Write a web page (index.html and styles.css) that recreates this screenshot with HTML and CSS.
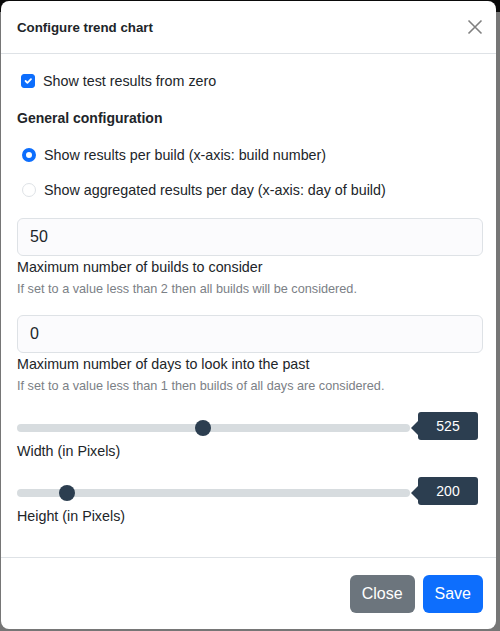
FILE: index.html
```html
<!DOCTYPE html>
<html lang="en">
<head>
    <meta charset="UTF-8">
    <title>Configure trend chart</title>
    <link rel="stylesheet" href="styles.css">
</head>
<body>
    <div class="modal">
        <div class="modal-header">
            <h5 class="modal-title">Configure trend chart</h5>
            <button class="btn-close" type="button" aria-label="Close">
                <svg width="16" height="16" viewBox="0 0 16 16"><path d="M1.5 1.5 L14.5 14.5 M14.5 1.5 L1.5 14.5" stroke="#808080" stroke-width="1.6" fill="none"/></svg>
            </button>
        </div>

        <div class="modal-body">
            <label class="check-row">
                <input type="checkbox" class="check-input" checked>
                Show test results from zero
            </label>

            <h6 class="section-title">General configuration</h6>

            <label class="check-row radio-row">
                <input type="radio" class="radio-input" name="mode" checked>
                Show results per build (x-axis: build number)
            </label>
            <label class="check-row radio-row second">
                <input type="radio" class="radio-input" name="mode">
                Show aggregated results per day (x-axis: day of build)
            </label>

            <input type="number" class="form-control first" value="50">
            <label class="form-label">Maximum number of builds to consider</label>
            <div class="form-text">If set to a value less than 2 then all builds will be considered.</div>

            <input type="number" class="form-control" value="0">
            <label class="form-label">Maximum number of days to look into the past</label>
            <div class="form-text">If set to a value less than 1 then builds of all days are considered.</div>

            <div class="range-row">
                <input type="range" class="range" min="100" max="1000" value="525">
                <output class="bubble">525</output>
            </div>
            <label class="form-label">Width (in Pixels)</label>

            <div class="range-row second">
                <input type="range" class="range" min="100" max="1000" value="200">
                <output class="bubble">200</output>
            </div>
            <label class="form-label">Height (in Pixels)</label>
        </div>

        <div class="modal-footer">
            <button class="btn btn-secondary" type="button">Close</button>
            <button class="btn btn-primary" type="button">Save</button>
        </div>
    </div>
</body>
</html>
```

FILE: styles.css
```css
html {
    background: linear-gradient(#0a0a0a 0, #0a0a0a 12px, #767676 12px);
    height: 100%;
}

body {
    margin: 0;
    font-family: "Liberation Sans", Arial, sans-serif;
    font-size: 14.3px;
    color: #212529;
}

.modal {
    margin: 1px 4px 0 1px;
    height: 628px;
    background: #fff;
    border-radius: 8px;
    display: flex;
    flex-direction: column;
}

.modal-header {
    height: 52px;
    border-bottom: 1px solid #dee2e6;
    display: flex;
    align-items: center;
    justify-content: space-between;
    padding: 0 13px 0 16px;
}

.modal-title {
    margin: 0;
    font-size: 13.3px;
    font-weight: bold;
}

.btn-close {
    background: none;
    border: none;
    padding: 0;
    width: 16px;
    height: 16px;
    cursor: pointer;
}

.modal-body {
    flex: 1;
    padding: 16px 13px 0 16px;
    display: flex;
    flex-direction: column;
}

.check-row {
    display: flex;
    align-items: center;
    height: 22px;
    padding-left: 4px;
}

.check-input,
.radio-input {
    appearance: none;
    -webkit-appearance: none;
    width: 14px;
    height: 14px;
    margin: 0 8px 0 0;
    border: 1px solid #dee2e6;
    background: #fff;
}

.check-input {
    border-radius: 3px;
}

.check-input:checked {
    background-color: #0d6efd;
    border-color: #0d6efd;
    background-image: url("data:image/svg+xml,%3csvg xmlns='http://www.w3.org/2000/svg' viewBox='0 0 20 20'%3e%3cpath fill='none' stroke='%23fff' stroke-linecap='round' stroke-linejoin='round' stroke-width='3' d='m6 10 3 3 6-6'/%3e%3c/svg%3e");
    background-size: 100% 100%;
}

.radio-input {
    border-radius: 50%;
}

.radio-input:checked {
    border: 4px solid #0d6efd;
}

.radio-row {
    margin-top: 15px;
}

.radio-row.second {
    margin-top: 13px;
}

.radio-row .radio-input {
    margin-left: 1px;
}

.section-title {
    margin: 15px 0 0;
    font-size: 14px;
    font-weight: bold;
    line-height: 22px;
}

.form-control {
    box-sizing: border-box;
    height: 38px;
    margin-top: 17px;
    padding: 0 12px;
    border: 1px solid #dee2e6;
    border-radius: 6px;
    background: #fbfbfd;
    font-family: inherit;
    font-size: 16px;
    color: #212529;
}

.form-label {
    line-height: 22px;
}

.form-text {
    margin-top: 2px;
    line-height: 18px;
    font-size: 12.7px;
    color: #7b8086;
}

.range-row {
    margin-top: 17px;
    height: 28px;
    display: flex;
    align-items: center;
    padding-right: 5px;
}

.range-row.second {
    margin-top: 15px;
}

.range {
    -webkit-appearance: none;
    appearance: none;
    flex: 1;
    margin: 4px 0 0;
    height: 16px;
    background: transparent;
}

.range::-webkit-slider-runnable-track {
    height: 8px;
    background: #d7dcdf;
    border-radius: 4px;
}

.range::-webkit-slider-thumb {
    -webkit-appearance: none;
    width: 16px;
    height: 16px;
    margin-top: -4px;
    border: none;
    border-radius: 50%;
    background: #2c3e50;
}

.bubble {
    position: relative;
    width: 60px;
    height: 28px;
    margin-left: 8px;
    line-height: 28px;
    text-align: center;
    background: #2c3e50;
    color: #fff;
    border-radius: 3px;
    font-size: 14px;
}

.bubble::after {
    content: "";
    position: absolute;
    left: -7px;
    top: 9px;
    border-top: 7px solid transparent;
    border-bottom: 7px solid transparent;
    border-right: 7px solid #2c3e50;
}

.modal-footer {
    border-top: 1px solid #dee2e6;
    padding: 17px 13px 16px 16px;
    display: flex;
    justify-content: flex-end;
    gap: 8px;
}

.btn {
    height: 38px;
    padding: 0 12px;
    border: none;
    border-radius: 6px;
    font-family: inherit;
    font-size: 16px;
    color: #fff;
    cursor: pointer;
}

.btn-secondary {
    background: #6c757d;
}

.btn-primary {
    background: #0d6efd;
}
```
